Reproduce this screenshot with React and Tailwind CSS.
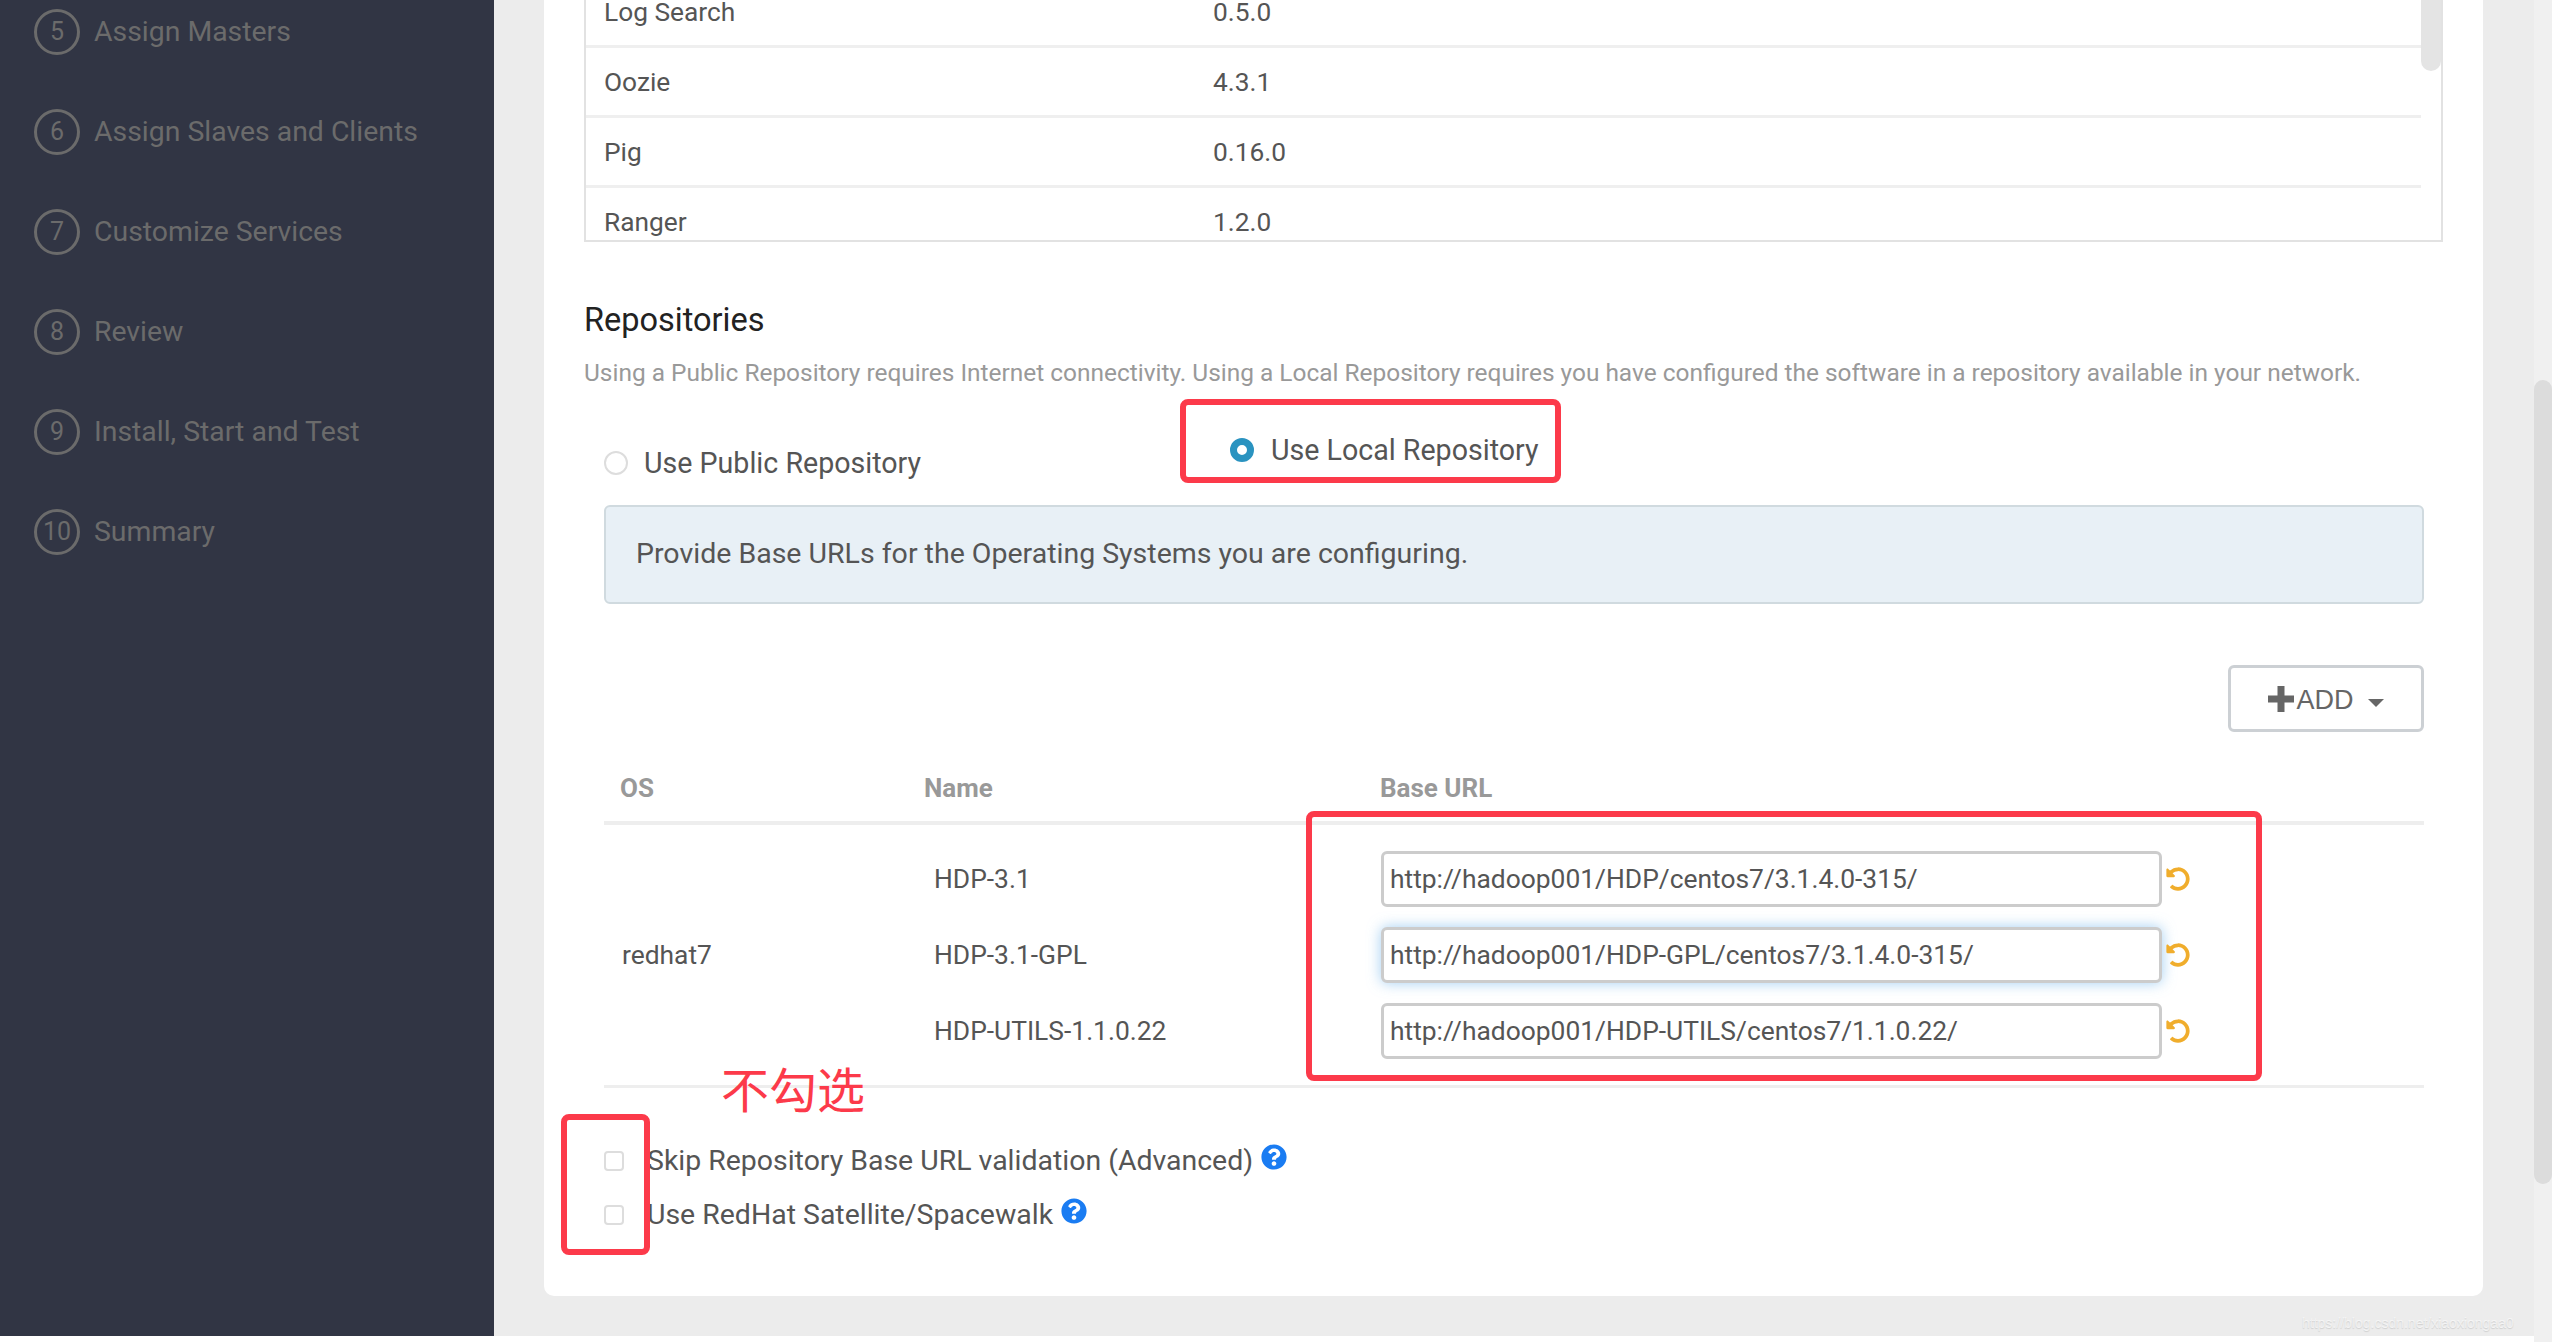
import React from 'react';
import { FaQuestionCircle, FaUndoAlt } from 'react-icons/fa';

const roboto = "font-['Roboto',sans-serif]";

const steps = [
    { n: 5, label: 'Assign Masters' },
    { n: 6, label: 'Assign Slaves and Clients' },
    { n: 7, label: 'Customize Services' },
    { n: 8, label: 'Review' },
    { n: 9, label: 'Install, Start and Test' },
    { n: 10, label: 'Summary' },
];

const stack = [
    { name: 'Log Search', version: '0.5.0' },
    { name: 'Oozie', version: '4.3.1' },
    { name: 'Pig', version: '0.16.0' },
    { name: 'Ranger', version: '1.2.0' },
];

const repos = [
    { name: 'HDP-3.1', url: 'http://hadoop001/HDP/centos7/3.1.4.0-315/' },
    { name: 'HDP-3.1-GPL', url: 'http://hadoop001/HDP-GPL/centos7/3.1.4.0-315/', focused: true },
    { name: 'HDP-UTILS-1.1.0.22', url: 'http://hadoop001/HDP-UTILS/centos7/1.1.0.22/' },
];

const Sidebar = () => (
    <div className="w-[494px] shrink-0 bg-[#313544] pt-[9px] pl-[34px]">
        {steps.map(step => (
            <div key={step.n} className="flex items-center h-[46px] mb-[54px]">
                <div className="w-[46px] h-[46px] rounded-full border-[3px] border-[#6b6b6b] flex items-center justify-center text-[25px] text-[#6b6b6b]">
                    {step.n}
                </div>
                <span className="ml-[14px] text-[28.4px] text-[#6b6b6b]">{step.label}</span>
            </div>
        ))}
    </div>
);

const StackTable = () => (
    <div className="flex h-[266px] border-2 border-[#e2e2e2] overflow-hidden text-[26.3px] text-[#555]">
        <div className="flex-1">
            {stack.map(row => (
                <div key={row.name} className="flex items-center h-[70px] shrink-0 pl-[18px] pt-[3px] border-b-[3px] border-[#efefef]">
                    <span className="w-[609px]">{row.name}</span>
                    <span>{row.version}</span>
                </div>
            ))}
        </div>
        <div className="w-[20px] h-[93px] rounded-b-[10px] bg-[#e4e4e4]"></div>
    </div>
);

const RepoRow = ({ repo }) => (
    <div className="flex items-center h-[56px] mb-[20px] last:mb-0">
        <span className="w-[447px] pt-[2px] text-[#555]">{repo.name}</span>
        <div className={`w-[781px] h-[56px] pl-[6px] pt-[2px] flex items-center bg-white rounded-[6px] border-[3px] border-[#cccccc] text-[#555] ${repo.focused ? 'shadow-[0_0_14px_rgba(102,175,233,0.6)]' : ''}`}>
            {repo.url}
        </div>
        <FaUndoAlt className="ml-[4px] text-[#f0ad2c]" size={24} />
    </div>
);

const Repositories = () => (
    <div>
        <h2 className="mt-[60px] text-[32.5px] leading-[36px] text-[#222]">Repositories</h2>
        <p className="mt-[20px] text-[24.44px] leading-[30px] text-[#999]">
            Using a Public Repository requires Internet connectivity. Using a Local Repository requires you have configured the software in a repository available in your network.
        </p>

        <div className="pl-[20px] pr-[19px]">
            <div className="flex h-[117px] pt-[4px] text-[28.6px] text-[#555]">
                <label className="flex items-center h-[60px] w-[626px] mt-[41px]">
                    <span className="w-[24px] h-[24px] rounded-full border-2 border-[#dddddd] bg-white"></span>
                    <span className="ml-[16px]">Use Public Repository</span>
                </label>
                <label className="flex items-center h-[60px] mt-[28px]">
                    <span className="w-[24px] h-[24px] rounded-full border-[7px] border-[#2a93c0] bg-white"></span>
                    <span className="ml-[17px]">Use Local Repository</span>
                </label>
            </div>

            <div className="flex items-center h-[99px] pl-[30px] rounded-[6px] border-2 border-[#d0dadf] bg-[#e8f0f6] text-[28.5px] text-[#555]">
                Provide Base URLs for the Operating Systems you are configuring.
            </div>

            <div className="flex justify-end mt-[61px]">
                <button className="flex items-center justify-center w-[196px] h-[67px] rounded-[6px] border-[3px] border-[#ccd0d4] bg-white font-['Liberation_Sans',sans-serif] text-[27px] text-[#666]">
                    <svg width="26" height="26" viewBox="0 0 26 26" fill="#666">
                        <path d="M9.5 0h7v9.5H26v7h-9.5V26h-7v-9.5H0v-7h9.5z" />
                    </svg>
                    <span className="ml-[2px] mt-[4px]">ADD</span>
                    <svg className="ml-[14px] mt-[9px]" width="16" height="8" viewBox="0 0 16 8" fill="#666">
                        <path d="M0 0h16L8 8z" />
                    </svg>
                </button>
            </div>

            <div className="flex items-center h-[64px] pb-[6px] mt-[29px] border-b-4 border-[#eeeeee] text-[26px] font-bold text-[#999]">
                <span className="w-[320px] pl-[16px]">OS</span>
                <span className="w-[456px]">Name</span>
                <span>Base URL</span>
            </div>

            <div className="flex items-center h-[263px] border-b-[3px] border-[#eeeeee] text-[26.4px] text-[#555]">
                <span className="w-[330px] pl-[18px] pt-[2px]">redhat7</span>
                <div>
                    {repos.map(repo => <RepoRow key={repo.name} repo={repo} />)}
                </div>
            </div>

            <div className="mt-[46px] text-[28.45px] text-[#555]">
                <div className="flex items-center h-[54px]">
                    <span className="w-[20px] h-[20px] rounded-[4px] border-2 border-[#dddddd]"></span>
                    <span className="ml-[23px]">Skip Repository Base URL validation (Advanced)</span>
                    <FaQuestionCircle className="ml-[8px] mb-[8px] text-[#1a7cf2]" size={26} />
                </div>
                <div className="flex items-center h-[54px]">
                    <span className="w-[20px] h-[20px] rounded-[4px] border-2 border-[#dddddd]"></span>
                    <span className="ml-[23px]">Use RedHat Satellite/Spacewalk</span>
                    <FaQuestionCircle className="ml-[8px] mb-[8px] text-[#1a7cf2]" size={26} />
                </div>
            </div>
        </div>
    </div>
);

export default function App() {
    return (
        <div className={`relative flex w-[2552px] h-[1342px] overflow-hidden bg-[#f0f0f0] ${roboto}`}>
            <div className="w-[2534px] shrink-0 flex flex-col bg-white">
                <div className="flex h-[1336px] overflow-hidden bg-[#ececec]">
                    <Sidebar />
                    <div className="w-[1939px] h-[1320px] -mt-[24px] ml-[50px] px-[40px] rounded-b-[10px] bg-white">
                        <StackTable />
                        <Repositories />
                    </div>
                </div>
            </div>
            <div className="flex-1 pt-[380px]">
                <div className="h-[804px] rounded-full bg-[#dcdcdc]"></div>
            </div>

            {/* annotations drawn on top of the screenshot */}
            <div className="absolute left-[1180px] top-[399px] w-[381px] h-[84px] rounded-[8px] border-[6px] border-[#fc3a4a]"></div>
            <div className="absolute left-[1306px] top-[811px] w-[956px] h-[270px] rounded-[8px] border-[6px] border-[#fc3a4a]"></div>
            <div className="absolute left-[561px] top-[1114px] w-[89px] h-[141px] rounded-[8px] border-[6px] border-[#fc3a4a]"></div>
            <div className="absolute left-[721px] top-[1057px] text-[48px] leading-[60px] text-[#fc3a4a] font-['Noto_Sans_CJK_SC',sans-serif]">不勾选</div>
            <div className="absolute left-[2302px] top-[1314px] text-[14px] leading-[18px] text-white/60 font-['Liberation_Sans',sans-serif] [text-shadow:0_1px_1px_rgba(0,0,0,0.12)]">https://blog.csdn.net/xiaoxiongaa0</div>
        </div>
    );
}
